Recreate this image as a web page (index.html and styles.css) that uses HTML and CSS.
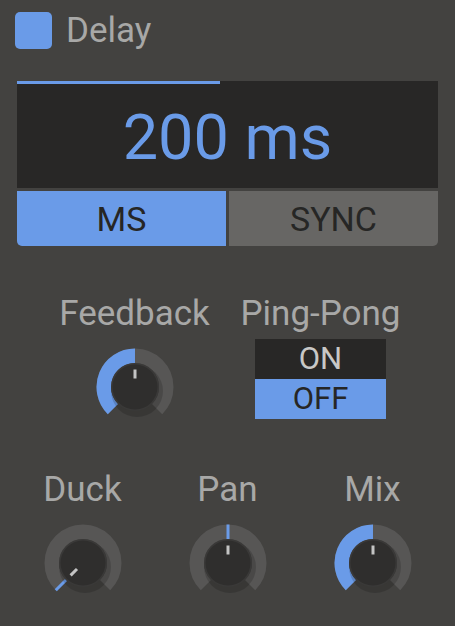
FILE: index.html
```html
<!DOCTYPE html>
<html lang="en">
<head>
  <meta charset="UTF-8">
  <meta name="viewport" content="width=device-width, initial-scale=1.0">
  <title>Delay</title>
  <link rel="stylesheet" href="styles.css">
</head>
<body>
  <div class="header">
    <span class="checkbox"></span>
    <span class="title">Delay</span>
  </div>

  <div class="display">
    <div class="display-bar" style="width: 48.2%;"></div>
    <div class="display-value">200 ms</div>
  </div>

  <div class="modes">
    <button class="mode active">MS</button>
    <button class="mode">SYNC</button>
  </div>

  <div class="row row-mid">
    <div class="control">
      <div class="label">Feedback</div>
      <svg class="knob" viewBox="0 0 80 80" width="80" height="80">
        <path class="knob-track" d="M17.9 62.1 A31.25 31.25 0 1 1 62.1 62.1"/>
        <path class="knob-value" d="M17.9 62.1 A31.25 31.25 0 0 1 40 8.75"/>
        <circle class="knob-shadow" cx="42" cy="44" r="26"/>
        <circle class="knob-rim" cx="40" cy="40" r="24"/>
        <circle class="knob-cap" cx="40" cy="40" r="22.5"/>
        <line class="knob-mark" x1="40" y1="31.5" x2="40" y2="22.5"/>
      </svg>
    </div>
    <div class="control">
      <div class="label">Ping-Pong</div>
      <div class="toggle">
        <div class="toggle-opt">ON</div>
        <div class="toggle-opt active">OFF</div>
      </div>
    </div>
  </div>

  <div class="row row-bottom">
    <div class="control">
      <div class="label">Duck</div>
      <svg class="knob" viewBox="0 0 80 80" width="80" height="80">
        <path class="knob-track" d="M17.9 62.1 A31.25 31.25 0 1 1 62.1 62.1"/>
        <line class="knob-tick" x1="40" y1="16" x2="40" y2="1.5" transform="rotate(-135 40 40)"/>
        <circle class="knob-shadow" cx="42" cy="44" r="26"/>
        <circle class="knob-rim" cx="40" cy="40" r="24"/>
        <circle class="knob-cap" cx="40" cy="40" r="22.5"/>
        <line class="knob-mark" x1="40" y1="31.5" x2="40" y2="22.5" transform="rotate(-135 40 40)"/>
      </svg>
    </div>
    <div class="control">
      <div class="label">Pan</div>
      <svg class="knob" viewBox="0 0 80 80" width="80" height="80">
        <path class="knob-track" d="M17.9 62.1 A31.25 31.25 0 1 1 62.1 62.1"/>
        <line class="knob-tick" x1="40" y1="16" x2="40" y2="1.5"/>
        <circle class="knob-shadow" cx="42" cy="44" r="26"/>
        <circle class="knob-rim" cx="40" cy="40" r="24"/>
        <circle class="knob-cap" cx="40" cy="40" r="22.5"/>
        <line class="knob-mark" x1="40" y1="31.5" x2="40" y2="22.5"/>
      </svg>
    </div>
    <div class="control">
      <div class="label">Mix</div>
      <svg class="knob" viewBox="0 0 80 80" width="80" height="80">
        <path class="knob-track" d="M17.9 62.1 A31.25 31.25 0 1 1 62.1 62.1"/>
        <path class="knob-value" d="M17.9 62.1 A31.25 31.25 0 0 1 40 8.75"/>
        <circle class="knob-shadow" cx="42" cy="44" r="26"/>
        <circle class="knob-rim" cx="40" cy="40" r="24"/>
        <circle class="knob-cap" cx="40" cy="40" r="22.5"/>
        <line class="knob-mark" x1="40" y1="31.5" x2="40" y2="22.5"/>
      </svg>
    </div>
  </div>
</body>
</html>
```

FILE: styles.css
```css
body {
  margin: 0;
  background-color: #434240;
  font-family: Roboto, "Noto Sans", sans-serif;
  color: #a8a8a7;
}
.header {
  display: flex;
  align-items: center;
  padding: 12px 0 0 15px;
  height: 37px;
}
.checkbox {
  width: 37px;
  height: 37px;
  border-radius: 5px;
  background-color: #6a9be8;
}
.title {
  margin-left: 14px;
  font-size: 35px;
  line-height: 37px;
}
.display {
  margin: 32px 17px 0;
  height: 107px;
  background-color: #282726;
  display: flex;
  flex-direction: column;
}
.display-bar {
  height: 3px;
  background-color: #6a9be8;
}
.display-value {
  flex: 1;
  display: flex;
  align-items: center;
  justify-content: center;
  padding-top: 2px;
  font-size: 63px;
  color: #6a9be8;
}
.modes {
  display: grid;
  grid-template-columns: 1fr 1fr;
  gap: 3px;
  margin: 3px 17px 0;
}
.mode {
  height: 55px;
  border: none;
  padding: 0;
  font-family: inherit;
  font-size: 34px;
  color: #262625;
  background-color: #676664;
}
.mode:first-child {
  border-bottom-left-radius: 5px;
}
.mode:last-child {
  border-bottom-right-radius: 5px;
}
.mode.active {
  background-color: #6a9be8;
}
.row {
  display: flex;
  justify-content: center;
}
.row-mid {
  margin-top: 48px;
}
.row-mid .control {
  width: 186px;
}
.row-bottom {
  margin-top: 43px;
}
.row-bottom .control {
  width: 145px;
}
.control {
  display: flex;
  flex-direction: column;
  align-items: center;
}
.label {
  font-size: 35px;
  line-height: 40px;
}
.knob {
  display: block;
  margin-top: 13px;
}
.knob-track {
  fill: none;
  stroke: #575655;
  stroke-width: 14.5;
}
.knob-value {
  fill: none;
  stroke: #6a9be8;
  stroke-width: 14.5;
}
.knob-tick {
  stroke: #6a9be8;
  stroke-width: 3;
}
.knob-shadow {
  fill: rgba(0, 0, 0, 0.16);
}
.knob-rim {
  fill: #3a3938;
}
.knob-cap {
  fill: #2f2e2d;
}
.knob-mark {
  stroke: #c4c4c4;
  stroke-width: 3;
}
.toggle {
  margin-top: 5px;
  width: 131px;
}
.toggle-opt {
  height: 40px;
  line-height: 40px;
  text-align: center;
  font-size: 31px;
  color: #c8c8c7;
  background-color: #282726;
}
.toggle-opt.active {
  color: #262625;
  background-color: #6a9be8;
}
```
